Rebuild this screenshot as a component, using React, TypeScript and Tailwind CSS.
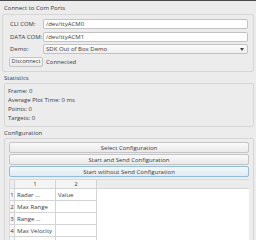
export default function App() {
  const rows = ["Radar ...", "Max Range", "Range ...", "Max Velocity", ""];
  return (
    <div className="w-[256px] h-[240px] overflow-hidden bg-[#ececec] text-[#3a3a3a] text-[6px] leading-none font-['Open_Sans',sans-serif]">
      <div className="h-[1px] bg-[#4a4a4a]" />
      <div className="h-[13px] flex items-center pl-[4px]">Connect to Com Ports</div>
      <div className="ml-[2px] w-[252px] h-[58px] border border-[#d6d6d6] rounded-[2px] pt-[4px]">
        <div className="flex h-[10px] items-center">
          <div className="w-[40px] pl-[7px]">CLI COM:</div>
          <div className="w-[205px] h-[10px] bg-white border border-[#c2c2c2] rounded-[2px] flex items-center pl-[2px]">/dev/ttyACM0</div>
        </div>
        <div className="flex h-[10px] items-center mt-[3px]">
          <div className="w-[40px] pl-[7px]">DATA COM:</div>
          <div className="w-[205px] h-[10px] bg-white border border-[#c2c2c2] rounded-[2px] flex items-center pl-[2px]">/dev/ttyACM1</div>
        </div>
        <div className="flex h-[10px] items-center mt-[2px]">
          <div className="w-[40px] pl-[7px]">Demo:</div>
          <div className="w-[205px] h-[10px] bg-gradient-to-b from-[#fdfdfd] to-[#eeeeee] border border-[#c2c2c2] rounded-[2px] flex items-center pl-[2px] pr-[3px] justify-between">
            <span>SDK Out of Box Demo</span>
            <svg width="4" height="3" viewBox="0 0 4 3"><path d="M0 0h4L2 3z" fill="#444" /></svg>
          </div>
        </div>
        <div className="flex h-[10px] items-center mt-[3px]">
          <div className="ml-[6px] w-[34px] h-[10px] bg-gradient-to-b from-[#fafafa] to-[#e9e9e9] border border-[#c4c4c4] rounded-[2px] flex items-center justify-center text-[5.6px]">Disconnect</div>
          <div className="ml-[3px]">Connected</div>
        </div>
      </div>
      <div className="h-[11px] flex items-center pl-[4px]">Statistics</div>
      <div className="ml-[4px] w-[250px] h-[44px] border border-[#d6d6d6] rounded-[2px] pt-[2px] pl-[3px]">
        <div className="h-[9px] flex items-center">Frame: 0</div>
        <div className="h-[9px] flex items-center">Average Plot Time: 0 ms</div>
        <div className="h-[9px] flex items-center">Points: 0</div>
        <div className="h-[9px] flex items-center">Targets: 0</div>
      </div>
      <div className="h-[11px] flex items-center pl-[4px]">Configuration</div>
      <div className="ml-[4px] w-[250px] h-[120px] border border-[#d6d6d6] rounded-[2px] pt-[3px] px-[4px]">
        <div className="h-[11px] bg-gradient-to-b from-[#fafafa] to-[#e9e9e9] border border-[#c4c4c4] rounded-[2px] flex items-center justify-center">Select Configuration</div>
        <div className="mt-[1px] h-[11px] bg-gradient-to-b from-[#fafafa] to-[#e9e9e9] border border-[#c4c4c4] rounded-[2px] flex items-center justify-center">Start and Send Configuration</div>
        <div className="mt-[1px] h-[11px] bg-gradient-to-b from-[#f3f7fa] to-[#e2ebf2] border border-[#93bcd8] rounded-[2px] flex items-center justify-center">Start without Send Configuration</div>
        <div className="mt-[2px] h-[80px] bg-white border-l border-t border-[#dadada]">
          <div className="flex h-[9px] bg-[#ececec] border-b border-[#d4d4d4]">
            <div className="w-[5px] border-r border-[#d4d4d4]" />
            <div className="w-[41px] border-r border-[#d4d4d4] flex items-center justify-center bg-[#f4f4f4]">1</div>
            <div className="w-[41px] border-r border-[#d4d4d4] flex items-center justify-center bg-[#f4f4f4]">2</div>
          </div>
          {rows.map((r, i) => (
            <div key={i} className="flex h-[12px]">
              <div className="w-[5px] border-r border-b border-[#d4d4d4] flex items-center justify-center bg-[#f7f7f7]">{i < 4 ? i + 1 : ""}</div>
              <div className="w-[41px] border-r border-b border-[#d4d4d4] flex items-center pl-[2px]">{r}</div>
              <div className="w-[41px] border-r border-b border-[#d4d4d4] flex items-center pl-[2px]">{i === 0 ? "Value" : ""}</div>
            </div>
          ))}
        </div>
      </div>
    </div>
  );
}
